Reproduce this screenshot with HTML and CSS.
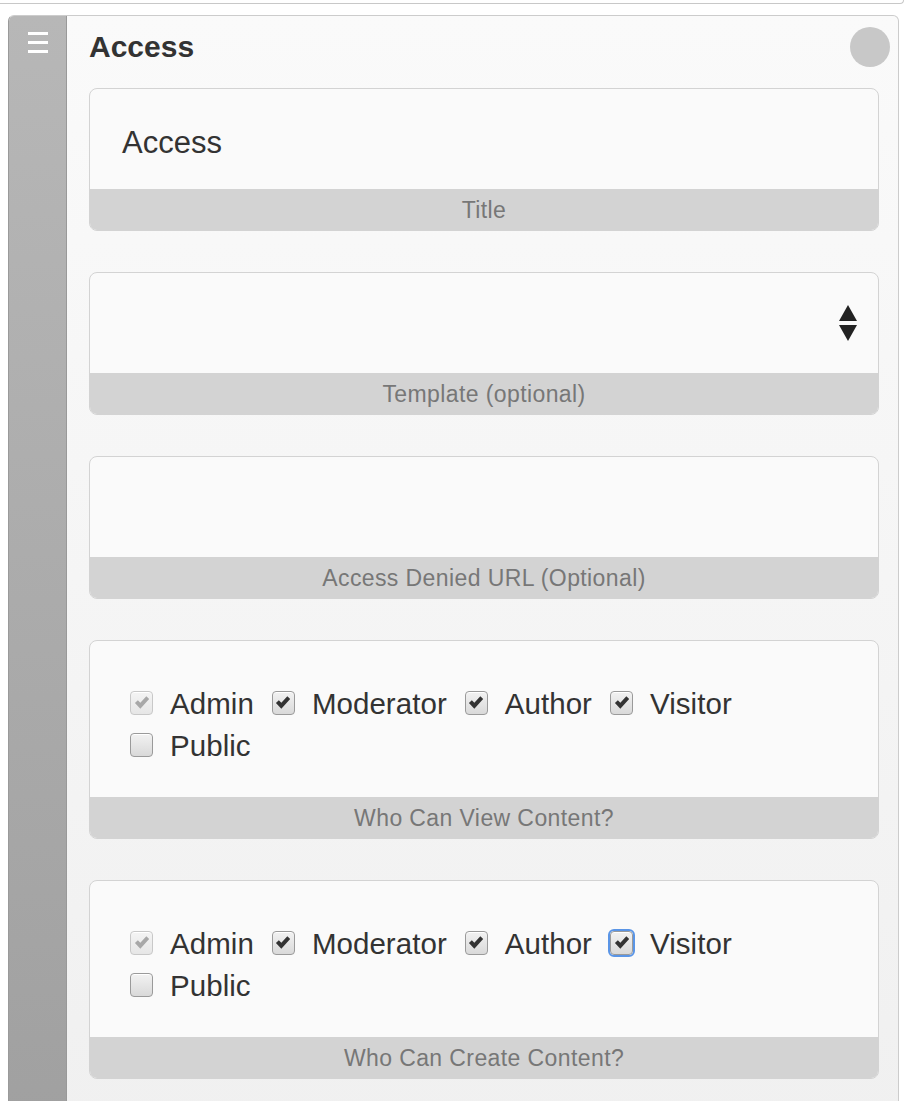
FILE: index.html
```html
<!DOCTYPE html>
<html>
<head>
<meta charset="utf-8">
<title>Access</title>
<link rel="stylesheet" href="styles.css">
</head>
<body>
<div class="prev"></div>
<div class="panel">
  <div class="handle">
    <span class="burger"><i></i><i></i><i></i></span>
  </div>
  <div class="content">
    <div class="head">
      <h2 class="head-title">Access</h2>
      <span class="dot"></span>
    </div>

    <div class="field">
      <div class="control control-text">Access</div>
      <div class="label">Title</div>
    </div>

    <div class="field">
      <div class="control control-select">
        <svg class="arrows" width="18" height="36" viewBox="0 0 18 36"><polygon points="9,0 18,16 0,16" fill="#222"/><polygon points="0,20 18,20 9,36" fill="#222"/></svg>
      </div>
      <div class="label">Template (optional)</div>
    </div>

    <div class="field">
      <div class="control control-text"></div>
      <div class="label">Access Denied URL (Optional)</div>
    </div>

    <div class="field">
      <div class="control control-checks">
        <label class="opt"><span class="box box-disabled"><svg viewBox="0 0 24 24"><path d="M3.5 12 L7 8.8 L10 11.8 L17.2 4 L20.6 7.3 L10 18.8 Z"/></svg></span>Admin</label>
        <label class="opt"><span class="box"><svg viewBox="0 0 24 24"><path d="M3.5 12 L7 8.8 L10 11.8 L17.2 4 L20.6 7.3 L10 18.8 Z"/></svg></span>Moderator</label>
        <label class="opt"><span class="box"><svg viewBox="0 0 24 24"><path d="M3.5 12 L7 8.8 L10 11.8 L17.2 4 L20.6 7.3 L10 18.8 Z"/></svg></span>Author</label>
        <label class="opt"><span class="box"><svg viewBox="0 0 24 24"><path d="M3.5 12 L7 8.8 L10 11.8 L17.2 4 L20.6 7.3 L10 18.8 Z"/></svg></span>Visitor</label>
        <label class="opt"><span class="box box-empty"></span>Public</label>
      </div>
      <div class="label">Who Can View Content?</div>
    </div>

    <div class="field">
      <div class="control control-checks">
        <label class="opt"><span class="box box-disabled"><svg viewBox="0 0 24 24"><path d="M3.5 12 L7 8.8 L10 11.8 L17.2 4 L20.6 7.3 L10 18.8 Z"/></svg></span>Admin</label>
        <label class="opt"><span class="box"><svg viewBox="0 0 24 24"><path d="M3.5 12 L7 8.8 L10 11.8 L17.2 4 L20.6 7.3 L10 18.8 Z"/></svg></span>Moderator</label>
        <label class="opt"><span class="box"><svg viewBox="0 0 24 24"><path d="M3.5 12 L7 8.8 L10 11.8 L17.2 4 L20.6 7.3 L10 18.8 Z"/></svg></span>Author</label>
        <label class="opt"><span class="box box-focus"><svg viewBox="0 0 24 24"><path d="M3.5 12 L7 8.8 L10 11.8 L17.2 4 L20.6 7.3 L10 18.8 Z"/></svg></span>Visitor</label>
        <label class="opt"><span class="box box-empty"></span>Public</label>
      </div>
      <div class="label">Who Can Create Content?</div>
    </div>
  </div>
</div>
</body>
</html>
```

FILE: styles.css
```css
html, body {
  margin: 0;
  padding: 0;
  background: #fff;
  overflow: hidden;
  height: 1101px;
}

body {
  font-family: "Liberation Sans", Arial, sans-serif;
  color: #333;
}

.prev {
  width: 903px;
  height: 3px;
  border-right: 1px solid #c8c8c8;
  border-bottom: 1px solid #c8c8c8;
  border-bottom-right-radius: 6px;
}

.panel {
  display: flex;
  margin: 11px 0 0 8px;
  width: 889px;
  min-height: 1120px;
  border: 1px solid #cccccc;
  border-left-color: #9a9a9a;
  border-radius: 6px 6px 0 0;
  background: linear-gradient(#fafafa, #f0f0f0);
}

.handle {
  flex: 0 0 57px;
  border-right: 1px solid #999;
  border-top-left-radius: 5px;
  background: linear-gradient(#b7b7b7, #a0a0a0);
  display: flex;
  justify-content: center;
  padding-top: 16px;
}

.burger {
  display: flex;
  flex-direction: column;
  gap: 6px;
  width: 20px;
  height: 21px;
}

.burger i {
  display: block;
  height: 3px;
  background: #fff;
}

.content {
  flex: 1;
  padding: 0 19px 0 22px;
}

.head {
  height: 62px;
  display: flex;
  align-items: center;
  justify-content: space-between;
  margin-bottom: 10px;
}

.head-title {
  margin: 0;
  font-size: 30px;
  font-weight: bold;
  color: #333;
}

.dot {
  width: 40px;
  height: 40px;
  border-radius: 50%;
  background: #c8c8c8;
  margin-right: -11px;
}

.field {
  border: 1px solid #d3d3d3;
  border-radius: 8px;
  overflow: hidden;
  margin-bottom: 41px;
  background: #fafafa;
}

.control {
  height: 100px;
  box-sizing: border-box;
}

.control-text {
  padding: 8px 0 0 32px;
  font-size: 31px;
  line-height: 92px;
  color: #333;
}

.control-select {
  display: flex;
  align-items: center;
  justify-content: flex-end;
  padding-right: 21px;
}

.control-checks {
  height: 156px;
  padding: 42px 32px 30px 40px;
  display: flex;
  flex-wrap: wrap;
  align-content: flex-start;
  column-gap: 18px;
}

.opt {
  display: inline-flex;
  align-items: center;
  height: 42px;
  font-size: 29.5px;
  letter-spacing: 0.05px;
  color: #333;
}

.box {
  box-sizing: border-box;
  width: 23px;
  height: 24px;
  margin-top: -3px;
  margin-right: 17px;
  border: 1px solid #9a9a9a;
  border-radius: 4px;
  background: linear-gradient(#f2f2f2, #d9d9d9);
  display: flex;
  align-items: center;
  justify-content: center;
  box-shadow: inset 0 1px 0 #fff;
}

.box svg {
  width: 20px;
  height: 20px;
  fill: #333;
}

.box-disabled {
  border-color: #c8c8c8;
  background: linear-gradient(#f4f4f4, #e6e6e6);
}

.box-disabled svg {
  fill: #a8a8a8;
}

.box-focus {
  outline: 2px solid #5a95e6;
  outline-offset: 0;
}

.label {
  height: 41px;
  line-height: 43px;
  background: #d3d3d3;
  text-align: center;
  font-size: 23px;
  letter-spacing: 0.4px;
  color: #777;
}
```
